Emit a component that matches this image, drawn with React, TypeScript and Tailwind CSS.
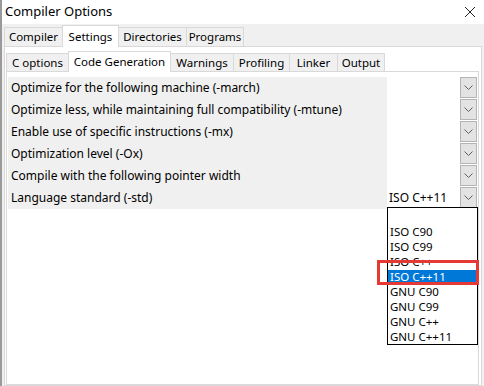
import React from "react";

const Chevron = () => (
  <svg width="9" height="5" viewBox="0 0 9 5" fill="none">
    <path d="M0.5 0.5 L4.5 4.5 L8.5 0.5" stroke="#606060" strokeWidth="1" />
  </svg>
);

const rows = [
  { label: "Optimize for the following machine (-march)", value: "" },
  { label: "Optimize less, while maintaining full compatibility (-mtune)", value: "" },
  { label: "Enable use of specific instructions (-mx)", value: "" },
  { label: "Optimization level (-Ox)", value: "" },
  { label: "Compile with the following pointer width", value: "" },
  { label: "Language standard (-std)", value: "ISO C++11" },
];

const items = ["ISO C90", "ISO C99", "ISO C++", "ISO C++11", "GNU C90", "GNU C99", "GNU C++", "GNU C++11"];

export default function App() {
  return (
    <div
      className="relative w-[484px] h-[386px] overflow-hidden bg-white text-[12px] text-black flex flex-col border-l-2 border-[#9a9a9a]"
      style={{ fontFamily: '"Noto Sans", "Open Sans", sans-serif' }}
    >
      {/* Title bar */}
      <div className="h-[24px] flex items-center justify-between pl-[3px] pr-[8px] bg-white">
        <span className="text-[13px]">Compiler Options</span>
        <svg width="12" height="12" viewBox="0 0 12 12">
          <path d="M1 1 L11 11 M11 1 L1 11" stroke="#222" strokeWidth="1" />
        </svg>
      </div>

      {/* Body */}
      <div className="flex-1 bg-[#f0f0f0] flex flex-col pl-[2px]">
        {/* Outer tabs */}
        <div className="flex items-end h-[22px] text-[11.5px]">
          <div className="w-[58px] h-[19px] border-t border-l border-[#d9d9d9] flex items-center justify-center whitespace-nowrap">Compiler</div>
          <div className="w-[57px] h-[22px] border-t border-l border-r border-[#d9d9d9] bg-white flex items-center justify-center whitespace-nowrap -mb-px relative z-10">Settings</div>
          <div className="w-[67px] h-[19px] border-t border-[#d9d9d9] flex items-center justify-center whitespace-nowrap">Directories</div>
          <div className="w-[58px] h-[19px] border-t border-l border-r border-[#d9d9d9] flex items-center justify-center whitespace-nowrap">Programs</div>
        </div>

        {/* Outer panel */}
        <div className="flex-1 bg-white border border-[#d9d9d9] mr-[2px] flex flex-col pt-[3px] pl-[1px] pr-[2px]">
          {/* Inner tabs */}
          <div className="flex items-end h-[21px] text-[11.5px]">
            <div className="w-[62px] h-[18px] border-t border-l border-[#d9d9d9] bg-[#f0f0f0] flex items-center justify-center whitespace-nowrap">C options</div>
            <div className="w-[103px] h-[21px] border-t border-l border-r border-[#d9d9d9] bg-white flex items-center justify-center whitespace-nowrap -mb-px relative z-10">Code Generation</div>
            <div className="w-[62px] h-[18px] border-t border-[#d9d9d9] bg-[#f0f0f0] flex items-center justify-center whitespace-nowrap">Warnings</div>
            <div className="w-[56px] h-[18px] border-t border-l border-[#d9d9d9] bg-[#f0f0f0] flex items-center justify-center whitespace-nowrap">Profiling</div>
            <div className="w-[48px] h-[18px] border-t border-l border-[#d9d9d9] bg-[#f0f0f0] flex items-center justify-center whitespace-nowrap">Linker</div>
            <div className="w-[48px] h-[18px] border-t border-l border-r border-[#d9d9d9] bg-[#f0f0f0] flex items-center justify-center whitespace-nowrap">Output</div>
          </div>

          {/* Inner panel */}
          <div className="flex-1 bg-white border border-[#d9d9d9] pt-[5px] pl-[1px] flex flex-col">
            {rows.map((r, i) => (
              <div key={i} className="flex h-[22px]">
                <div className="w-[379px] bg-[#f0f0f0] pl-[3px] flex items-center whitespace-nowrap overflow-hidden">
                  {r.label}
                </div>
                <div className="w-[73px] pl-[2px] flex items-center whitespace-nowrap">{r.value}</div>
                <div className="w-[17px] h-[21px] border border-[#b4b4b4] bg-[#e3e3e3] flex items-center justify-center">
                  <Chevron />
                </div>
              </div>
            ))}
          </div>
        </div>
      </div>

      {/* Dropdown list */}
      <div className="absolute left-[385px] top-[207px] w-[91px] h-[138px] border border-black bg-white flex flex-col pt-[1px] text-[11.5px]">
        <div className="h-[16px]" />
        {items.map((it) => (
          <div
            key={it}
            className={
              "h-[15px] leading-[14px] pl-[2px] flex items-center whitespace-nowrap " +
              (it === "ISO C++11" ? "bg-[#0078d7] text-white" : "")
            }
          >
            {it}
          </div>
        ))}
      </div>

      {/* Red annotation */}
      <div className="absolute left-[375px] top-[260px] w-[102px] h-[25px] border-[3px] border-[#e53935]" />
    </div>
  );
}
